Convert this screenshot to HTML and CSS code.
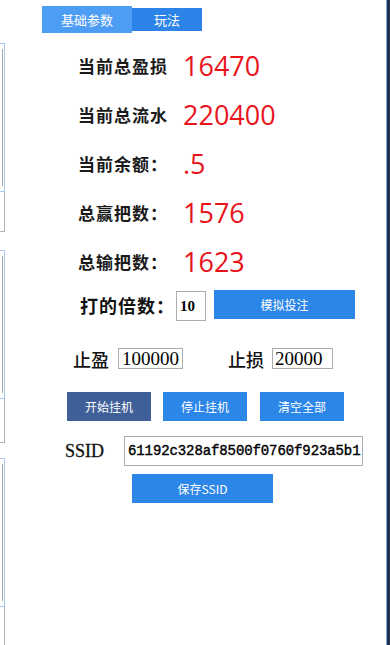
FILE: index.html
```html
<!DOCTYPE html>
<html lang="zh">
<head>
<meta charset="utf-8">
<title>挂机</title>
<link rel="stylesheet" href="styles.css">
</head>
<body>
<div class="window">
  <div class="side">
    <div class="gap g0"></div>
    <div class="box"><div class="inner"></div></div>
    <div class="tail t1"></div>
    <div class="gap g1"></div>
    <div class="box"><div class="inner"></div></div>
    <div class="tail t2"></div>
    <div class="gap g2"></div>
    <div class="box"><div class="inner"></div></div>
    <div class="tail t3"></div>
  </div>
  <div class="main">
    <div class="tabs">
      <div class="tab active">基础参数</div>
      <div class="tab">玩法</div>
    </div>
    <div class="stats">
      <div class="stat"><span class="label">当前总盈损</span><span class="value">16470</span></div>
      <div class="stat"><span class="label">当前总流水</span><span class="value">220400</span></div>
      <div class="stat"><span class="label">当前余额：</span><span class="value">.5</span></div>
      <div class="stat"><span class="label">总赢把数：</span><span class="value">1576</span></div>
      <div class="stat"><span class="label">总输把数：</span><span class="value">1623</span></div>
    </div>
    <div class="multi">
      <span class="multi-label">打的倍数：</span>
      <div class="field field-multi">10</div>
      <button class="btn btn-sim">模拟投注</button>
    </div>
    <div class="limits">
      <span class="limit-label">止盈</span>
      <div class="field field-win">100000</div>
      <span class="limit-label second">止损</span>
      <div class="field field-loss">20000</div>
    </div>
    <div class="actions">
      <button class="btn btn-act btn-dark">开始挂机</button>
      <button class="btn btn-act">停止挂机</button>
      <button class="btn btn-act btn-last">清空全部</button>
    </div>
    <div class="ssid">
      <span class="ssid-label">SSID</span>
      <div class="field field-ssid">61192c328af8500f0760f923a5b1</div>
    </div>
    <button class="btn btn-save">保存SSID</button>
  </div>
  <div class="edge"></div>
</div>
</body>
</html>
```

FILE: styles.css
```css
* { box-sizing: border-box; }
html, body { margin: 0; padding: 0; background: #ffffff; }
.window {
  display: flex;
  width: 390px;
  height: 645px;
  overflow: hidden;
  background: #ffffff;
}
.side {
  width: 6px;
  display: flex;
  flex-direction: column;
  flex-shrink: 0;
}
.gap.g0 { height: 43px; }
.gap.g1 { height: 18px; }
.gap.g2 { height: 15px; }
.box {
  width: 5px;
  height: 149px;
  border-top: 1px solid #a8c8f0;
  border-right: 1px solid #a8c8f0;
  border-bottom: 1px solid #a8c8f0;
  padding: 5px 0;
}
.box .inner {
  width: 3px;
  height: 100%;
  border-right: 1px solid #a9a9a9;
}
.tail {
  width: 5px;
  border-right: 1px solid #b4b4b4;
  border-bottom: 1px solid #b4b4b4;
}
.tail.t1 { height: 40px; }
.tail.t2 { height: 44px; }
.tail.t3 { flex: 1; border-bottom: none; }

.main {
  flex: 1;
  display: flex;
  flex-direction: column;
  font-family: "Noto Sans CJK SC", "Noto Sans", sans-serif;
  color: #111;
}
.edge {
  width: 4px;
  flex-shrink: 0;
  background: #1d3552;
  border-left: 1px solid #7ea6cf;
}

.tabs {
  display: flex;
  align-items: center;
  margin: 6px 0 0 36px;
  height: 27px;
}
.tab {
  width: 70px;
  height: 23px;
  background: #2c84e8;
  color: #ffffff;
  font-size: 13px;
  display: flex;
  align-items: center;
  justify-content: center;
}
.tab.active {
  width: 90px;
  height: 27px;
  background: #4e9df4;
}

.stats {
  margin: 8px 0 0 72px;
  display: flex;
  flex-direction: column;
}
.stat {
  height: 49px;
  display: flex;
  align-items: center;
}
.label {
  width: 105px;
  font-size: 17px;
  font-weight: 700;
  letter-spacing: 1px;
  color: #1a1a1a;
}
.value {
  font-family: "Open Sans", "Noto Sans", sans-serif;
  font-size: 27px;
  color: #e8141c;
  line-height: 1;
}

.multi {
  display: flex;
  align-items: flex-start;
  margin: 4px 0 0 74px;
  height: 31px;
}
.multi-label {
  width: 96px;
  font-size: 18px;
  font-weight: 700;
  line-height: 31px;
  letter-spacing: 1px;
}
.field {
  border: 1px solid #acadb3;
  background: #ffffff;
  color: #000;
  font-family: "Liberation Serif", serif;
  display: flex;
  align-items: center;
}
.field-multi {
  width: 30px;
  height: 30px;
  margin-top: 1px;
  padding-left: 3px;
  font-size: 15px;
  font-weight: 700;
}
.btn {
  border: none;
  background: #2b86e8;
  color: #ffffff;
  font-family: "Noto Sans CJK SC", sans-serif;
  font-size: 12px;
  padding: 0;
  display: flex;
  align-items: center;
  justify-content: center;
}
.btn-sim {
  width: 141px;
  height: 29px;
  margin-left: 8px;
}

.limits {
  display: flex;
  align-items: center;
  margin: 27px 0 0 67px;
  height: 21px;
}
.limit-label {
  font-size: 18px;
  font-weight: 500;
  width: 45px;
}
.limit-label.second { margin-left: 45px; width: 44px; }
.field-win {
  width: 65px;
  height: 21px;
  font-size: 19px;
  padding-left: 3px;
}
.field-loss {
  width: 61px;
  height: 21px;
  font-size: 19px;
  padding-left: 2px;
}

.actions {
  display: flex;
  margin: 23px 0 0 61px;
  gap: 12px;
}
.btn-act {
  width: 84px;
  height: 29px;
  font-size: 12px;
}
.btn-dark { background: #3f5f98; }
.btn-last { margin-left: 1px; }

.ssid {
  display: flex;
  align-items: center;
  margin: 15px 0 0 59px;
  height: 30px;
}
.ssid-label {
  font-family: "Liberation Serif", serif;
  font-size: 18px;
  width: 59px;
  color: #111;
  -webkit-text-stroke: 0.3px #111;
}
.field-ssid {
  width: 239px;
  height: 30px;
  font-family: "Liberation Mono", monospace;
  font-size: 14px;
  font-weight: 400;
  -webkit-text-stroke: 0.4px #000;
  padding-left: 3px;
  letter-spacing: -0.1px;
}
.btn-save {
  width: 141px;
  height: 29px;
  margin: 8px 0 0 126px;
}
```
